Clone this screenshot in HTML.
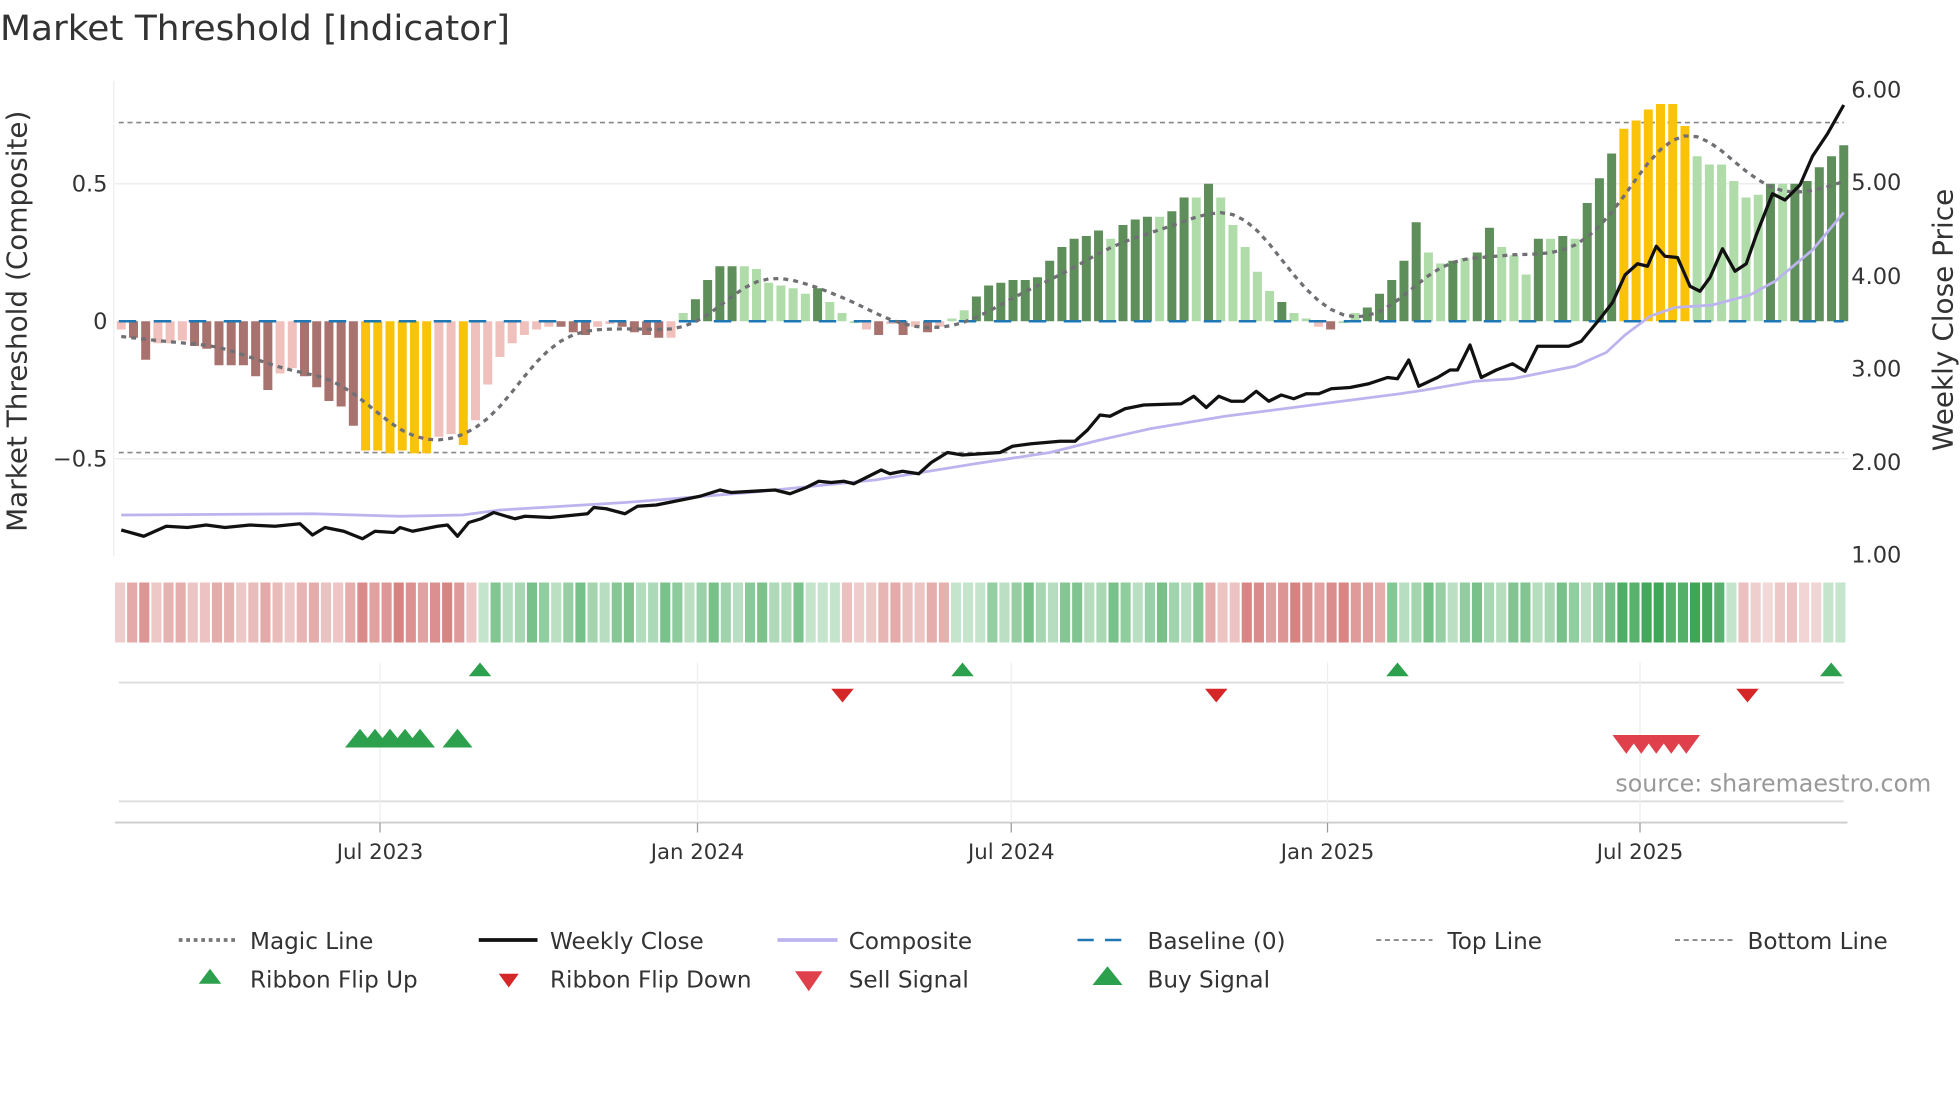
<!DOCTYPE html>
<html><head><meta charset="utf-8">
<style>
html,body{margin:0;padding:0;background:#fff;}
svg{display:block;font-family:"DejaVu Sans","Liberation Sans",sans-serif;}
</style></head>
<body>
<svg id="s" width="1960" height="1102" viewBox="0 0 1568 881.6" xmlns="http://www.w3.org/2000/svg">
<rect width="1568" height="882" fill="#fff"/>
<text x="0" y="32" font-size="28" fill="#333" textLength="408" lengthAdjust="spacingAndGlyphs">Market Threshold [Indicator]</text>
<g id="plot"></g>
<text x="86" y="153" font-size="18" fill="#333" text-anchor="end">0.5</text>
<text x="86" y="263" font-size="18" fill="#333" text-anchor="end">0</text>
<text x="86" y="373" font-size="18" fill="#333" text-anchor="end">−0.5</text>
<text x="1481" y="78" font-size="18" fill="#333">6.00</text>
<text x="1481" y="152" font-size="18" fill="#333">5.00</text>
<text x="1481" y="227" font-size="18" fill="#333">4.00</text>
<text x="1481" y="301" font-size="18" fill="#333">3.00</text>
<text x="1481" y="376" font-size="18" fill="#333">2.00</text>
<text x="1481" y="450" font-size="18" fill="#333">1.00</text>
<text transform="translate(21,257) rotate(-90)" font-size="22" fill="#333" text-anchor="middle" textLength="337" lengthAdjust="spacingAndGlyphs">Market Threshold (Composite)</text>
<text transform="translate(1562,256) rotate(-90)" font-size="22" fill="#333" text-anchor="middle" textLength="210" lengthAdjust="spacingAndGlyphs">Weekly Close Price</text>
<g font-size="17" fill="#333" text-anchor="middle">
<text x="304" y="687">Jul 2023</text>
<text x="558" y="687">Jan 2024</text>
<text x="809" y="687">Jul 2024</text>
<text x="1062" y="687">Jan 2025</text>
<text x="1312" y="687">Jul 2025</text>
</g>
<text x="1545" y="633" font-size="19" fill="#999" text-anchor="end">source: sharemaestro.com</text>
<g font-size="18.5" fill="#333">
<line x1="143" y1="752" x2="188" y2="752" stroke="#777" stroke-width="3" stroke-dasharray="3,3"/>
<text x="200" y="759">Magic Line</text>
<line x1="383" y1="752" x2="430" y2="752" stroke="#111" stroke-width="3"/>
<text x="440" y="759">Weekly Close</text>
<line x1="622" y1="752" x2="670" y2="752" stroke="#bcb4ee" stroke-width="3"/>
<text x="679" y="759">Composite</text>
<line x1="862" y1="752" x2="906" y2="752" stroke="#1f77b4" stroke-width="2" stroke-dasharray="13,9"/>
<text x="918" y="759">Baseline (0)</text>
<line x1="1101" y1="752" x2="1146" y2="752" stroke="#888" stroke-width="1.5" stroke-dasharray="4,3"/>
<text x="1158" y="759">Top Line</text>
<line x1="1340" y1="752" x2="1386" y2="752" stroke="#888" stroke-width="1.5" stroke-dasharray="4,3"/>
<text x="1398" y="759">Bottom Line</text>
<polygon points="168,775 177,787 159,787" fill="#2ca04c"/>
<text x="200" y="790">Ribbon Flip Up</text>
<polygon points="399,779 415,779 407,790" fill="#d62728"/>
<text x="440" y="790">Ribbon Flip Down</text>
<polygon points="636,777 658,777 647,793" fill="#e0404c"/>
<text x="679" y="790">Sell Signal</text>
<polygon points="886,773 898,788 874,788" fill="#2ca04c"/>
<text x="918" y="790">Buy Signal</text>
</g>
</svg>
<script>
(function(){
var NS="http://www.w3.org/2000/svg",g=document.getElementById("plot");
function el(t,a){var e=document.createElementNS(NS,t);for(var k in a)e.setAttribute(k,a[k]);g.appendChild(e);return e;}
var Y0=257,K=220;function yv(v){return Y0-v*K;}
el("line",{x1:91,y1:65,x2:91,y2:445,stroke:"#eee","stroke-width":1});
el("line",{x1:92,y1:147,x2:1478,y2:147,stroke:"#eee","stroke-width":1.2});
el("line",{x1:92,y1:367,x2:1478,y2:367,stroke:"#eee","stroke-width":1.2});
el("line",{x1:95,y1:98,x2:1475,y2:98,stroke:"#888","stroke-width":1.3,"stroke-dasharray":"4,3"});
el("line",{x1:95,y1:362,x2:1475,y2:362,stroke:"#888","stroke-width":1.3,"stroke-dasharray":"4,3"});
var d="-0.03 L|-0.06 D|-0.14 D|-0.08 L|-0.08 L|-0.07 L|-0.09 D|-0.1 D|-0.16 D|-0.16 D|-0.16 D|-0.2 D|-0.25 D|-0.19 L|-0.17 L|-0.2 D|-0.24 D|-0.29 D|-0.31 D|-0.38 D|-0.47 Y|-0.47 Y|-0.48 Y|-0.47 Y|-0.48 Y|-0.48 Y|-0.42 L|-0.41 L|-0.45 Y|-0.36 L|-0.23 L|-0.13 L|-0.08 L|-0.05 L|-0.03 L|-0.02 L|-0.02 D|-0.04 D|-0.05 D|-0.02 L|-0.01 L|-0.02 D|-0.04 D|-0.05 D|-0.06 D|-0.06 L|0.03 g|0.08 G|0.15 G|0.2 G|0.2 G|0.2 g|0.19 g|0.14 g|0.13 g|0.12 g|0.1 g|0.12 G|0.07 g|0.03 g|0.0 g|-0.03 L|-0.05 D|-0.01 L|-0.05 D|-0.02 L|-0.04 D|-0.02 L|0.01 g|0.04 g|0.09 G|0.13 G|0.14 G|0.15 G|0.15 G|0.16 G|0.22 G|0.27 G|0.3 G|0.31 G|0.33 G|0.3 g|0.35 G|0.37 G|0.38 G|0.38 g|0.4 G|0.45 G|0.45 g|0.5 G|0.45 g|0.35 g|0.27 g|0.18 g|0.11 g|0.07 G|0.03 g|0.01 g|-0.02 L|-0.03 D|0.0 g|0.03 g|0.05 G|0.1 G|0.15 G|0.22 G|0.36 G|0.25 g|0.21 g|0.22 G|0.23 g|0.25 G|0.34 G|0.27 g|0.24 g|0.17 g|0.3 G|0.3 g|0.31 G|0.3 g|0.43 G|0.52 G|0.61 G|0.7 Y|0.73 Y|0.77 Y|0.79 Y|0.79 Y|0.71 Y|0.6 g|0.57 g|0.57 g|0.51 g|0.45 g|0.46 g|0.5 G|0.5 g|0.5 G|0.51 G|0.56 G|0.6 G|0.64 G";
var parts=d.split("|");
var C={L:"#efc0bc",D:"#a8726e",Y:"#fbc20a",G:"#5e8f5a",g:"#b0dcaa"};
var N=parts.length,dx=(1475-97)/(N-1),vals=[];
parts.forEach(function(p,i){var a=p.split(" "),v=parseFloat(a[0]);vals.push(v);
 var x=97+i*dx,y1=Math.min(yv(v),Y0),h=Math.abs(v*K);if(h<1.5)h=1.5;
 el("rect",{x:x-3.6,y:y1,width:7.2,height:h,fill:C[a[1]]});});
el("line",{x1:95,y1:257,x2:1475,y2:257,stroke:"#1f77b4","stroke-width":2,"stroke-dasharray":"14,14"});
var m=[];for(var i=0;i<N;i++){var s=0,w=0;for(var j=-8;j<=3;j++){var k=i+j;if(k<0||k>=N)continue;var ww=Math.exp(-(j+2.5)*(j+2.5)/12);s+=vals[k]*ww;w+=ww;}m.push(s/w*0.94);}
var pm="";m.forEach(function(v,i){pm+=(i?"L":"M")+(97+i*dx).toFixed(1)+","+yv(v).toFixed(1);});
el("path",{d:pm,fill:"none",stroke:"#6f6f74","stroke-width":2.6,"stroke-dasharray":"4,4"});
var cp=[[97,412],[250,411],[320,413],[370,412],[400,408],[500,402],[600,394],[700,384],[780,371],[840,362],[880,352],[920,343],[980,333],[1050,324],[1120,315],[1140,312],[1180,305],[1210,303],[1260,293],[1285,282],[1300,268],[1320,253],[1340,246],[1370,244],[1400,236],[1420,225],[1450,200],[1475,170]];
el("path",{d:"M"+cp.map(function(p){return p.join(",");}).join(" L"),fill:"none",stroke:"#bcb4ee","stroke-width":2.2});
var wp=[[97,424],[115,429],[133,421],[150,422],[165,420],[180,422],[200,420],[220,421],[240,419],[250,428],[260,422],[275,425],[290,431],[300,425],[315,426],[320,422],[330,425],[350,421],[358,420],[366,429],[375,418],[385,415],[395,410],[405,413],[412,415],[420,413],[440,414],[460,412],[470,411],[475,406],[485,407],[500,411],[510,405],[525,404],[540,401],[560,397],[576,392],[585,394],[620,392],[632,395],[645,390],[655,385],[665,386],[675,385],[683,387],[705,376],[712,379],[722,377],[735,379],[745,370],[758,362],[770,364],[800,362],[810,357],[825,355],[848,353],[860,353],[870,344],[880,332],[888,333],[900,327],[915,324],[945,323],[955,317],[965,326],[975,317],[985,321],[995,321],[1005,313],[1015,321],[1025,316],[1035,319],[1045,315],[1055,315],[1065,311],[1080,310],[1095,307],[1110,302],[1118,303],[1127,288],[1135,309],[1150,302],[1160,296],[1166,296],[1176,276],[1185,302],[1197,296],[1210,291],[1220,297],[1230,277],[1255,277],[1265,273],[1280,255],[1290,242],[1300,220],[1310,211],[1318,213],[1325,197],[1332,205],[1342,206],[1352,229],[1360,233],[1368,222],[1378,199],[1388,217],[1397,211],[1405,188],[1418,155],[1428,160],[1440,148],[1450,125],[1462,107],[1475,84]];
el("path",{d:"M"+wp.map(function(p){return p.join(",");}).join(" L"),fill:"none",stroke:"#111","stroke-width":2.6,"stroke-linejoin":"round"});
var RW=1386/143;
function col(i){var x=92+i*RW+RW/2;
 var segs=[[380,"r"],[670,"G"],[765,"r"],[968,"G"],[1113,"r"],[1393,"G"],[1460,"r"],[2000,"G"]];
 var t;for(var s=0;s<segs.length;s++){if(x<segs[s][0]){t=segs[s][1];break;}}
 var r=Math.sin(i*1.7)*0.5+0.5;
 if(t=="r"){var a=0.35+0.2*r; if((x>110&&x<125)||(x>290&&x<370)||(x>990&&x<1100))a=0.6+0.2*r; if(x>1393||x<100||(x>670&&x<690))a=0.25+0.15*r;
   return "rgb("+Math.round(255-(255-205)*a)+","+Math.round(255-(255-100)*a)+","+Math.round(255-(255-98)*a)+")";}
 var a=0.35+0.35*r; if(x>1290&&x<1385)a=0.85+0.15*r; if(x>1385)a=0.3; if(x<395||(x>640&&x<670)||(x>765&&x<790))a=0.3;
 return "rgb("+Math.round(255-(255-60)*a)+","+Math.round(255-(255-165)*a)+","+Math.round(255-(255-85)*a)+")";}
for(var i=0;i<143;i++){var x=92+i*RW;el("rect",{x:x,y:466,width:RW-1.6,height:48,fill:col(i)});}
el("line",{x1:95,y1:546,x2:1475,y2:546,stroke:"#ddd","stroke-width":1.5});
el("line",{x1:95,y1:641,x2:1475,y2:641,stroke:"#ddd","stroke-width":1.5});
el("line",{x1:92,y1:658,x2:1478,y2:658,stroke:"#ccc","stroke-width":1.5});
[304,558,809,1062,1312].forEach(function(x){
 el("line",{x1:x,y1:530,x2:x,y2:658,stroke:"#eee","stroke-width":1});
 el("line",{x1:x,y1:658,x2:x,y2:666,stroke:"#999","stroke-width":1});});
[384,770,1118,1465].forEach(function(x){el("polygon",{points:(x)+",530 "+(x+9)+",541 "+(x-9)+",541",fill:"#2ca04c"});});
[674,973,1398].forEach(function(x){el("polygon",{points:(x-9)+",551 "+(x+9)+",551 "+x+",562",fill:"#d62728"});});
[288,300,312,324,336,366].forEach(function(x){el("polygon",{points:x+",583 "+(x+12)+",598 "+(x-12)+",598",fill:"#2ca04c"});});
[1301,1313,1325,1337,1349].forEach(function(x){el("polygon",{points:(x-11)+",588 "+(x+11)+",588 "+x+",603",fill:"#e0404c"});});
})();
</script>
</body></html>
